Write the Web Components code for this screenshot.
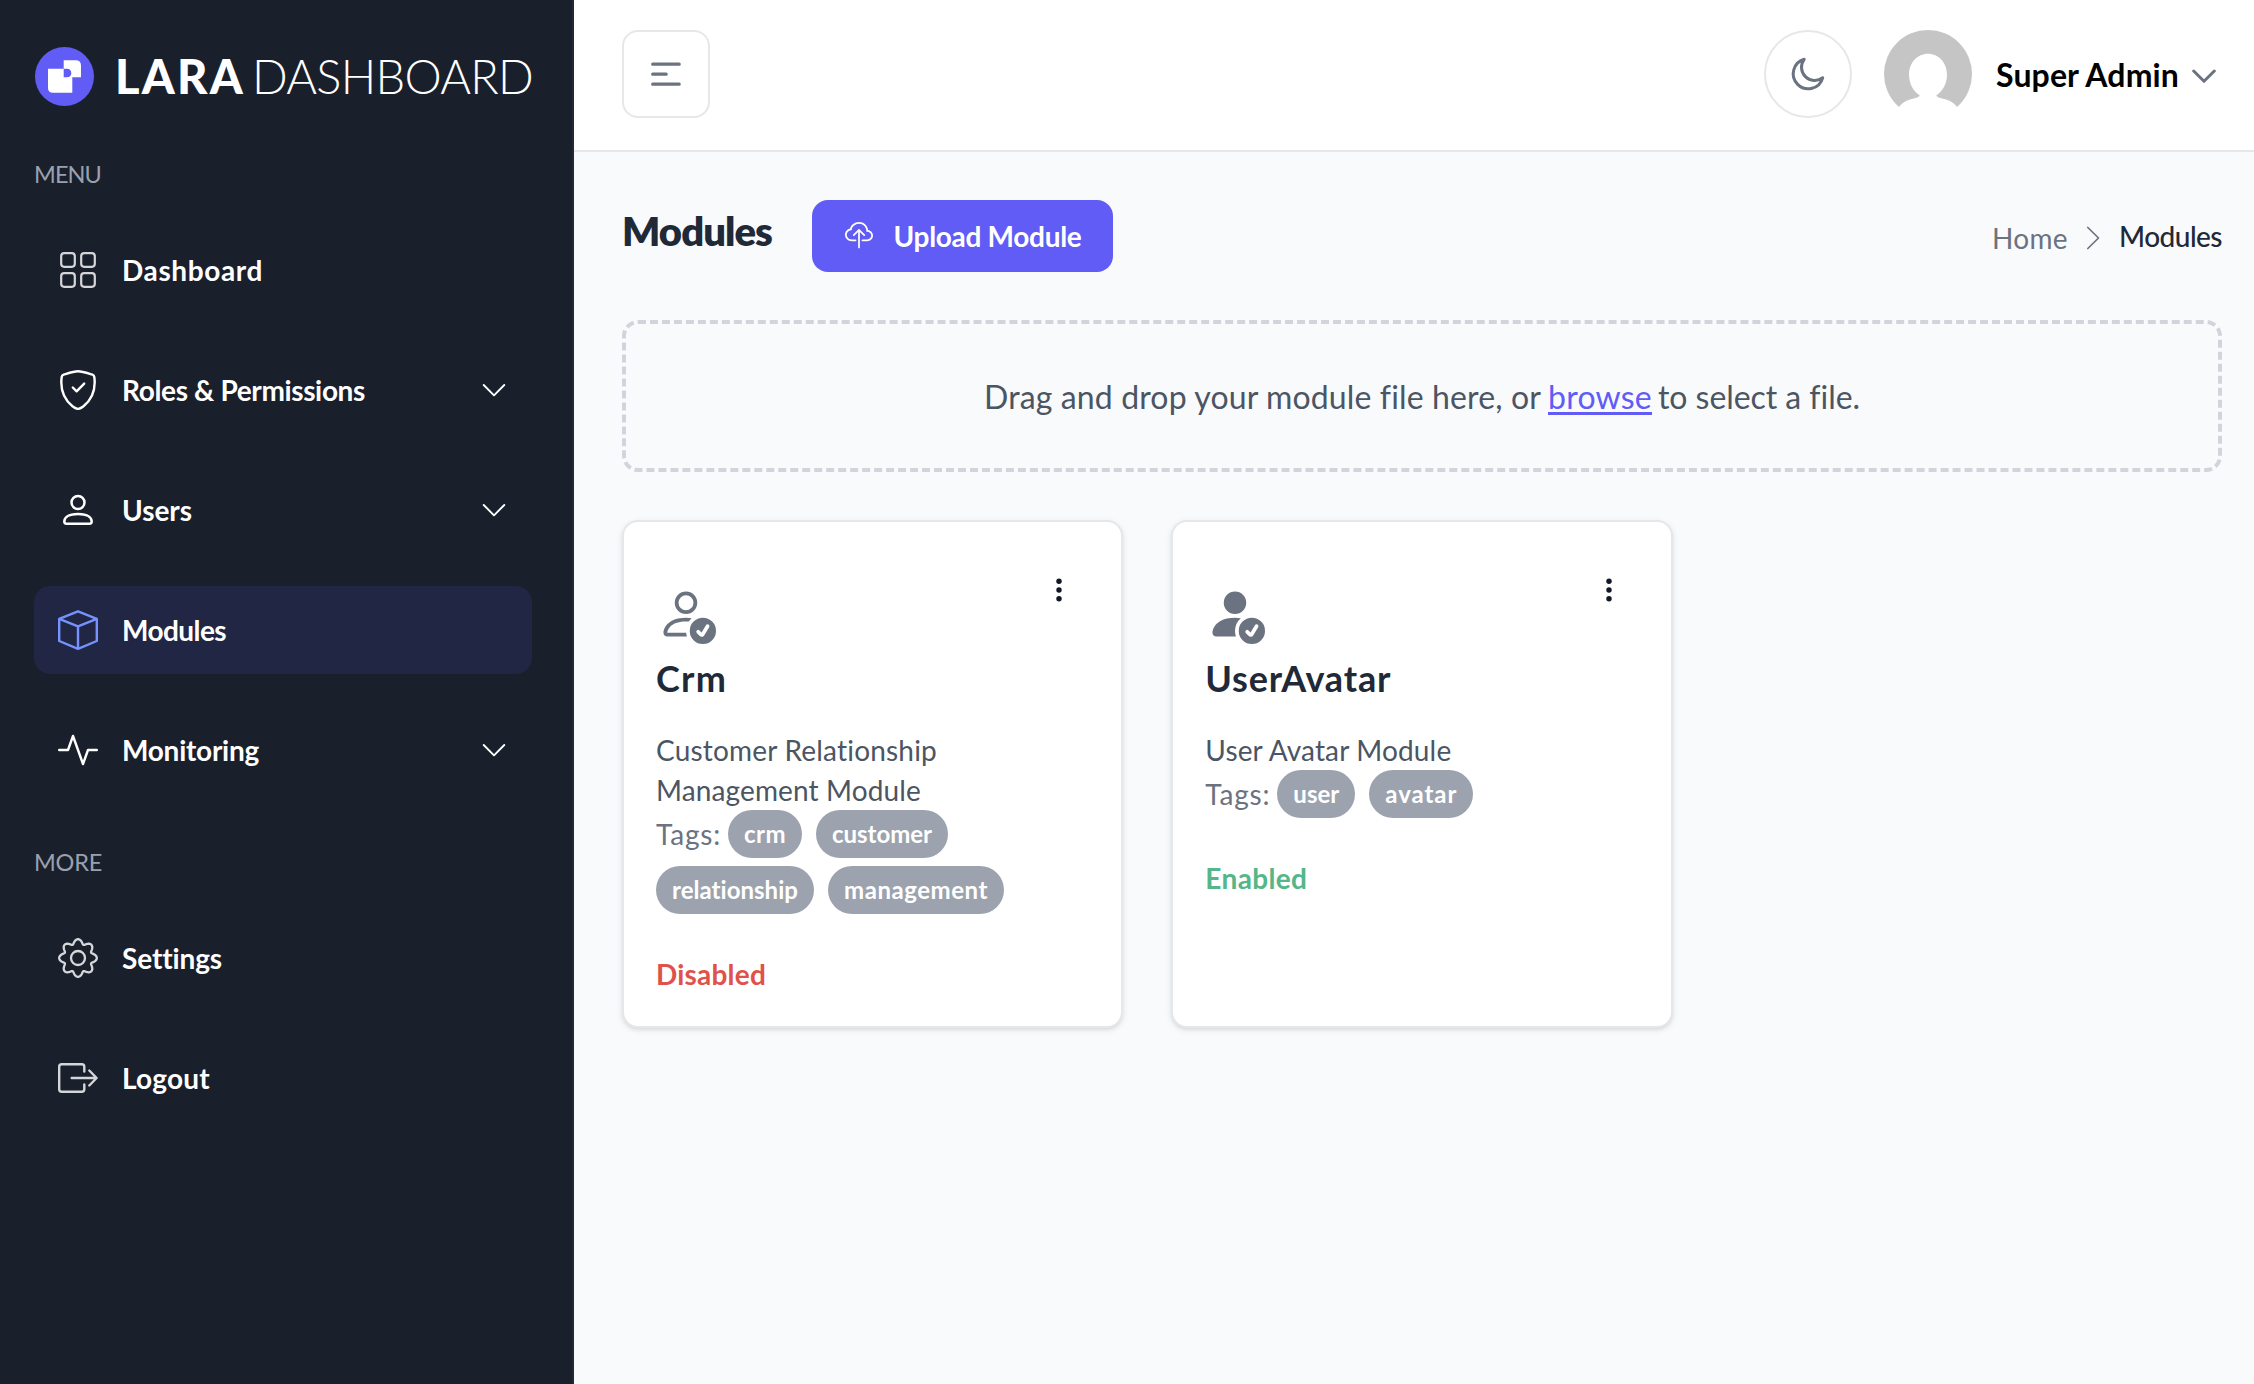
<!DOCTYPE html>
<html lang="en">
<head>
<meta charset="utf-8">
<title>Modules | Lara Dashboard</title>
<style>
html,body{margin:0;height:100%}
body{font-family:Lato,"Open Sans",sans-serif;background:#f9fafb;color:#1f2937;overflow:hidden}
</style>
</head>
<body>
<lara-app></lara-app>
<script>
const ICONS = {
  grid: ['0 0 40 40', '<g fill="none" stroke="currentColor" stroke-width="2.2"><rect x="3.2" y="3.2" width="13.6" height="13.6" rx="3"/><rect x="23.2" y="3.2" width="13.6" height="13.6" rx="3"/><rect x="3.2" y="23.2" width="13.6" height="13.6" rx="3"/><rect x="23.2" y="23.2" width="13.6" height="13.6" rx="3"/></g>'],
  shield: ['0 0 40 40', '<g fill="none" stroke="currentColor" stroke-width="2.4" stroke-linecap="round" stroke-linejoin="round"><path d="M20 1.3C16 1.3 10 3.3 5.6 4.6A2.6 2.6 0 0 0 3.700 6.800C1.900 20.500 7.500 30.500 14.500 36.200 17.500 38.500 19 38.900 20 38.900S22.500 38.500 25.500 36.200C32.500 30.500 38.100 20.500 36.300 6.800A2.600 2.600 0 0 0 34.400 4.600C30 3.300 24 1.300 20 1.300Z"/><path d="M14.800 17.500l3.800 3.800 7.600-7.700"/></g>'],
  user: ['0 0 40 40', '<g fill="none" stroke="currentColor" stroke-width="2.5" stroke-linejoin="round"><circle cx="20" cy="12.500" r="6.500"/><path d="M8.500 33.700H31.500Q33.700 33.700 33.700 31.500C33.700 28 30.500 24 20 24S6.300 28 6.300 31.500Q6.300 33.700 8.500 33.700Z"/></g>'],
  box: ['0 0 40 40', '<g fill="none" stroke="currentColor" stroke-width="2.400" stroke-linejoin="round"><path d="M20 1.300L38.800 8.800V31L20 38.800L1.200 31V8.800Z"/><path d="M1.200 8.800L20 16.400L38.800 8.800M20 16.400V38.800"/></g>'],
  activity: ['0 0 40 40', '<path fill="none" stroke="currentColor" stroke-width="2.400" stroke-linecap="round" stroke-linejoin="round" d="M1.200 20H10L15 6L25 34L30 20H38.800"/>'],
  logout: ['0 0 40 40', '<g fill="none" stroke="currentColor" stroke-width="2.400" stroke-linecap="round" stroke-linejoin="round"><path d="M26.300 13.500V8.700Q26.300 6.200 23.800 6.200H3.700Q1.200 6.200 1.200 8.700V31.300Q1.200 33.800 3.700 33.800H23.800Q26.300 33.800 26.300 31.300V26.500"/><path d="M13.700 20H38.300M31.300 12.500L38.600 20L31.300 27.500"/></g>'],
  upload: ['0 0 16 16', '<g fill="currentColor" fill-rule="evenodd"><path d="M4.406 1.342A5.530 5.530 0 0 1 8 0c2.690 0 4.923 2 5.166 4.579C14.758 4.804 16 6.137 16 7.773 16 9.569 14.502 11 12.687 11H10a.5.5 0 0 1 0-1h2.688C13.979 10 15 8.988 15 7.773c0-1.216-1.020-2.228-2.313-2.228h-.5v-.5C12.188 2.825 10.328 1 8 1a4.530 4.530 0 0 0-2.941 1.100c-.757.652-1.153 1.438-1.153 2.055v.448l-.445.049C2.064 4.805 1 5.952 1 7.318 1 8.785 2.230 10 3.781 10H6a.5.5 0 0 1 0 1H3.781C1.708 11 0 9.366 0 7.318c0-1.763 1.266-3.223 2.942-3.593.143-.863.698-1.723 1.464-2.383"/><path d="M7.646 4.146a.5.5 0 0 1 .708 0l3 3a.5.5 0 0 1-.708.708L8.500 5.707V14.500a.5.5 0 0 1-1 0V5.707L5.354 7.854a.5.5 0 1 1-.708-.708z"/></g>'],
  check: ['0 0 16 16', '<g fill="currentColor"><path d="M12.500 16a3.500 3.500 0 1 0 0-7 3.500 3.500 0 0 0 0 7m1.679-4.493-1.335 2.226a.75.75 0 0 1-1.174.144l-.774-.773a.5.5 0 0 1 .708-.708l.547.548 1.170-1.951a.5.5 0 1 1 .858.514M11 5a3 3 0 1 1-6 0 3 3 0 0 1 6 0M8 7a2 2 0 1 0 0-4 2 2 0 0 0 0 4"/><path d="M8.256 14a4.500 4.500 0 0 1-.229-1.004H3c.001-.246.154-.986.832-1.664C4.484 10.680 5.711 10 8 10q.39 0 .74.025c.226-.341.496-.65.804-.918Q8.844 9.002 8 9c-5 0-6 3-6 4s1 1 1 1z"/></g>'],
  checkfill: ['0 0 16 16', '<g fill="currentColor"><path d="M12.500 16a3.500 3.500 0 1 0 0-7 3.500 3.500 0 0 0 0 7m1.679-4.493-1.335 2.226a.75.75 0 0 1-1.174.144l-.774-.773a.5.5 0 0 1 .708-.708l.547.548 1.170-1.951a.5.5 0 1 1 .858.514M11 5a3 3 0 1 1-6 0 3 3 0 0 1 6 0"/><path d="M2 13c0 1 1 1 1 1h5.256A4.500 4.500 0 0 1 8 12.500a4.500 4.500 0 0 1 1.544-3.393Q8.844 9.002 8 9c-5 0-6 3-6 4"/></g>'],
  dots: ['0 0 16 16', '<g fill="currentColor"><circle cx="8" cy="3" r="1.550"/><circle cx="8" cy="8" r="1.550"/><circle cx="8" cy="13" r="1.550"/></g>'],
  down: ['0 0 24 24', '<path fill="none" stroke="currentColor" stroke-width="var(--sw,2)" stroke-linecap="round" stroke-linejoin="round" d="M1.700 7L12 17.300L22.300 7"/>'],
  right: ['0 0 24 24', '<path fill="none" stroke="currentColor" stroke-width="1.700" stroke-linecap="round" stroke-linejoin="round" d="M6.800 1.500L17.500 12L6.800 22.500"/>'],
  lines: ['0 0 32 32', '<path fill="none" stroke="currentColor" stroke-width="3.200" stroke-linecap="round" d="M2.700 6.200H29.200M2.700 16.200H16.200M2.700 26.200H29.200"/>'],
  moon: ['0 0 40 40', '<path fill="none" stroke="currentColor" stroke-width="3" stroke-linecap="round" stroke-linejoin="round" d="M16.200 5.300A15 15 0 1 0 34.700 23.800A13.200 13.200 0 0 1 16.200 5.300Z"/>'],
  avatar: ['0 0 88 88', '<circle cx="44" cy="44" r="44" fill="#c5c5c5"/><path fill="#fff" d="M44 23.700C54.500 23.700 63 32.500 63 44.500C63 54 58.500 61.500 52.300 65.300C53.500 68 58 68.300 62 69.500C67 71 70.500 73.500 73.500 77.500H88V88H0V77.500H14.500C17.500 73.500 21 71 26 69.500C30 68.300 34.500 68 35.700 65.300C29.500 61.500 25 54 25 44.500C25 32.500 33.500 23.700 44 23.700Z"/>'],
  logo: ['0 0 60 60', '<circle cx="30.500" cy="30.500" r="29.500" fill="#615cf6"/><path fill="#fff" d="M14 22.700H29.700V31.300H33C36 31.300 37.300 29.300 37.300 27S36 22.700 33 22.700H29.700V14.300H41.500Q47 14.300 47 19.500V31.300H38.300V46.700H19Q14 46.700 14 42Z"/>']
};

/* Eight-lobed gear outline drawn as a smooth polar curve. */
(() => {
  let d = '';
  for (let i = 0; i < 240; i++) {
    const t = i / 240 * Math.PI * 2;
    const a = t + 0.030 * Math.sin(8 * t);
    const r = 16.500 + 2.300 * Math.cos(8 * t);
    d += (i ? 'L' : 'M') + (20 + r * Math.cos(a)).toFixed(2) + ' ' + (20 + r * Math.sin(a)).toFixed(2);
  }
  ICONS.gear = ['0 0 40 40', `<g fill="none" stroke="currentColor" stroke-width="2.300" stroke-linejoin="round"><path d="${d}Z"/><circle cx="20" cy="20" r="7"/></g>`];
})();

class Base extends HTMLElement {
  connectedCallback() {
    if (this.shadowRoot) return;
    this.attachShadow({ mode: 'open' }).innerHTML = this.render();
    this.ready();
  }
  ready() {}
  attr(n, f = '') { return this.getAttribute(n) ?? f; }
}

/* Single line of text whose tracking is tuned to fill a given width. */
customElements.define('fit-text', class extends Base {
  render() {
    return `<style>:host{display:inline-block;white-space:nowrap;flex:none;width:${this.attr('w')}px}span{display:inline-block;white-space:pre;text-decoration:var(--line,none);text-decoration-thickness:3px;text-underline-offset:3px;text-decoration-skip-ink:none}</style><span><slot></slot></span>`;
  }
  ready() {
    const s = this.shadowRoot.querySelector('span');
    const n = this.textContent.length;
    s.style.letterSpacing = '0.0001px';
    s.style.letterSpacing = (+this.attr('w') - s.getBoundingClientRect().width) / n + 'px';
  }
});

customElements.define('ui-icon', class extends Base {
  render() {
    const [vb, body] = ICONS[this.attr('name')];
    const s = this.attr('size', '40');
    return `<style>:host{display:block;flex:none;width:${s}px;height:${s}px}svg{display:block;width:100%;height:100%}</style><svg viewBox="${vb}">${body}</svg>`;
  }
});

customElements.define('nav-item', class extends Base {
  render() {
    return `<style>
      :host{display:flex;align-items:center;height:88px;padding:0 24px;border-radius:16px;color:#fff;font-size:28px;font-weight:700;line-height:40px;box-sizing:border-box}
      :host([active]){background:#202644}
      :host([active]) .i{color:#7592ff}
      :host([dim]) .i{opacity:.82}
      .t{flex:1;margin-left:24px}
      .c{margin-right:2px;--sw:1.900}
    </style>
    <ui-icon class="i" name="${this.attr('icon')}"></ui-icon>
    <div class="t"><fit-text w="${this.attr('w')}">${this.attr('label')}</fit-text></div>
    ${this.hasAttribute('more') ? '<ui-icon class="c" name="down" size="24"></ui-icon>' : ''}`;
  }
});

customElements.define('side-bar', class extends Base {
  render() {
    return `<style>
      :host{display:flex;flex-direction:column;width:574px;flex:none;box-sizing:border-box;background:#1a1f2c;border-right:2px solid #222936;padding:46px 40px 0 34px}
      .brand{display:flex;align-items:center;height:60px;color:#fff;font-size:47px;line-height:60px}
      .brand ui-icon{margin-right:21px}
      b{font-weight:900;margin-right:7px}
      i{font-style:normal;font-weight:300}
      h3{margin:0;font-size:23.500px;font-weight:400;line-height:40px;color:#99a1af}
      .menu{margin-top:48px}.more{margin-top:48px}
      nav{display:flex;flex-direction:column;gap:32px;margin-top:32px}
    </style>
    <div class="brand"><ui-icon name="logo" size="60"></ui-icon><b><fit-text w="130">LARA</fit-text></b><i><fit-text w="281">DASHBOARD</fit-text></i></div>
    <h3 class="menu"><fit-text w="67">MENU</fit-text></h3>
    <nav>
      <nav-item icon="grid" label="Dashboard" w="141" dim></nav-item>
      <nav-item icon="shield" label="Roles &amp; Permissions" w="243" more></nav-item>
      <nav-item icon="user" label="Users" w="70" more></nav-item>
      <nav-item icon="box" label="Modules" w="104" active></nav-item>
      <nav-item icon="activity" label="Monitoring" w="137" more></nav-item>
    </nav>
    <h3 class="more"><fit-text w="68">MORE</fit-text></h3>
    <nav>
      <nav-item icon="gear" label="Settings" w="100" dim></nav-item>
      <nav-item icon="logout" label="Logout" w="88" dim></nav-item>
    </nav>`;
  }
});

customElements.define('top-bar', class extends Base {
  render() {
    return `<style>
      :host{display:flex;align-items:flex-start;box-sizing:border-box;height:152px;background:#fff;border-bottom:2px solid #e5e7eb;padding:30px 38px 0 48px;color:#6b7280}
      .b{display:flex;align-items:center;justify-content:center;box-sizing:border-box;width:88px;height:88px;border:2px solid #e5e7eb;border-radius:16px}
      .r{border-radius:50%;margin:0 32px 0 auto}
      .n{display:flex;align-items:center;height:88px;font-size:32px;font-weight:700;color:#000;line-height:48px;padding-top:2px;box-sizing:border-box;margin-left:24px}
      .c{align-self:flex-start;margin:34px 0 0 13px;--sw:3}
    </style>
    <div class="b"><ui-icon name="lines" size="32"></ui-icon></div>
    <div class="b r"><ui-icon name="moon"></ui-icon></div>
    <ui-icon name="avatar" size="88"></ui-icon>
    <div class="n"><fit-text w="183">Super Admin</fit-text></div>
    <ui-icon class="c" name="down" size="24"></ui-icon>`;
  }
});

customElements.define('page-head', class extends Base {
  render() {
    return `<style>
      :host{display:flex;align-items:center;height:72px}
      h1{align-self:flex-start;margin:0;font-size:40px;font-weight:800;line-height:63px;width:190px;flex:none}
      .u{display:flex;align-items:center;box-sizing:border-box;width:301px;height:72px;padding-left:33px;background:#615cf6;border-radius:16px;color:#fff;font-size:28px;font-weight:700;line-height:40px}
      .u fit-text{margin-left:20.500px}
      .c{display:flex;align-items:center;margin-left:auto;font-size:28px;line-height:40px;color:#6b7280}
      .c ui-icon{margin:3px 14px 0 13px}
      .h{padding-top:3px}
      .m{color:#1f2937;font-weight:500}
    </style>
    <h1><fit-text w="150">Modules</fit-text></h1>
    <div class="u"><ui-icon name="upload" size="28"></ui-icon><fit-text w="188">Upload Module</fit-text></div>
    <div class="c"><fit-text class="h" w="76">Home</fit-text><ui-icon name="right" size="24"></ui-icon><fit-text class="m" w="103">Modules</fit-text></div>`;
  }
});

customElements.define('drop-zone', class extends Base {
  render() {
    return `<style>
      :host{display:flex;align-items:center;justify-content:center;box-sizing:border-box;height:152px;padding-top:2px;border:4px dashed #d1d5db;border-radius:16px;font-size:32px;line-height:48px;color:#4b5563}
      .l{color:#615cf6;--line:underline;margin:0 6px 0 7px}
    </style>
    <fit-text w="557">Drag and drop your module file here, or</fit-text><fit-text class="l" w="104">browse</fit-text><fit-text w="202">to select a file.</fit-text>`;
  }
});

customElements.define('tag-pill', class extends Base {
  render() {
    return `<style>:host{display:flex;align-items:center;flex:none;height:48px;padding:0 16px;border-radius:24px;background:#9ca3af;color:#fff;font-size:24px;font-weight:700;line-height:32px}</style><fit-text w="${this.attr('w')}">${this.attr('label')}</fit-text>`;
  }
});

customElements.define('module-card', class extends Base {
  render() {
    return `<style>
      :host{display:block;box-sizing:border-box;height:508px;background:#fff;border:2px solid #e5e7eb;border-radius:16px;padding:32px;box-shadow:0 2px 6px rgba(0,0,0,.1),0 2px 4px -2px rgba(0,0,0,.1);font-size:28px;line-height:40px}
      .top{display:flex;justify-content:space-between;height:90px;color:#6b7280}
      .p{margin-top:30px}
      .d{margin:22px 16px 0 0;color:#101828}
      h2{margin:0;font-size:36px;font-weight:700;line-height:68px;height:86px}
      .desc{display:flex;flex-direction:column;color:#4b5563}
      .status{margin-top:40px;font-weight:700;color:${this.attr('color')}}
      .tags{color:#6b7280}
    </style>
    <div class="top"><ui-icon class="p" name="${this.attr('icon')}" size="60"></ui-icon><ui-icon class="d" name="dots" size="28"></ui-icon></div>
    <h2><fit-text w="${this.attr('tw')}">${this.attr('title')}</fit-text></h2>
    <div class="desc"><slot></slot></div>
    <div class="tags"><slot name="tags"></slot></div>
    <div class="status"><fit-text w="${this.attr('sw')}">${this.attr('status')}</fit-text></div>`;
  }
});

customElements.define('tag-row', class extends Base {
  render() {
    return `<style>:host{display:flex;flex-wrap:wrap;align-items:center;column-gap:14px;row-gap:8px}.l{margin-right:-7px}</style><fit-text class="l" w="65">Tags:</fit-text><slot></slot>`;
  }
});

customElements.define('lara-app', class extends Base {
  render() {
    return `<style>
      :host{display:flex;height:1384px}
      .main{flex:1;min-width:0;display:flex;flex-direction:column;background:#f9fafc}
      main{padding:48px 32px 0 48px}
      drop-zone{margin:48px 0}
      .cards{display:grid;grid-template-columns:repeat(3,1fr);gap:48px}
    </style>
    <side-bar></side-bar>
    <div class="main">
      <top-bar></top-bar>
      <main>
        <page-head></page-head>
        <drop-zone></drop-zone>
        <div class="cards">
          <module-card icon="check" title="Crm" tw="71" status="Disabled" sw="110" color="#df524b">
            <fit-text w="281">Customer Relationship</fit-text>
            <fit-text w="265">Management Module</fit-text>
            <tag-row slot="tags"><tag-pill label="crm" w="42"></tag-pill><tag-pill label="customer" w="100"></tag-pill><tag-pill label="relationship" w="126"></tag-pill><tag-pill label="management" w="144"></tag-pill></tag-row>
          </module-card>
          <module-card icon="checkfill" title="UserAvatar" tw="186" status="Enabled" sw="102" color="#54b689">
            <fit-text w="246">User Avatar Module</fit-text>
            <tag-row slot="tags"><tag-pill label="user" w="46"></tag-pill><tag-pill label="avatar" w="72"></tag-pill></tag-row>
          </module-card>
        </div>
      </main>
    </div>`;
  }
});
</script>
</body>
</html>
